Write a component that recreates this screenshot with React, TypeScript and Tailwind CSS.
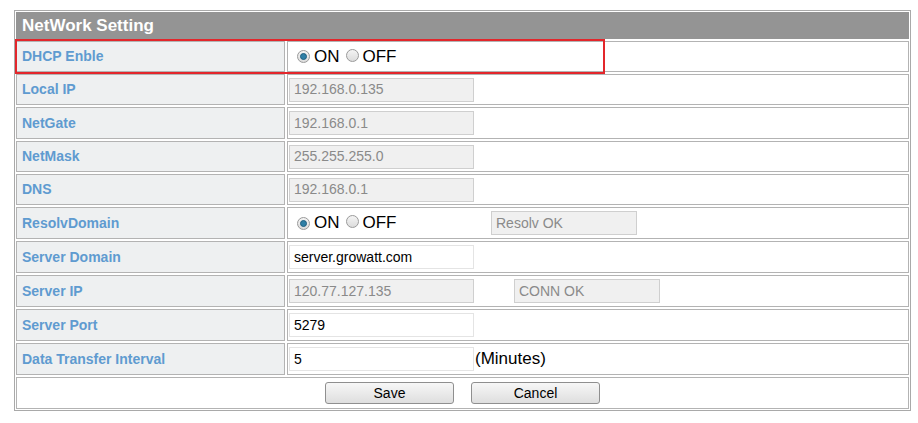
import { ReactNode } from 'react'

const FONT = { fontFamily: '"Liberation Sans", Arial, sans-serif' }

function Radio({ checked }: { checked?: boolean }) {
  return (
    <span className="inline-flex items-center justify-center w-[13px] h-[13px] rounded-full border border-[#9a9a9a] bg-gradient-to-b from-[#f4f4f4] to-[#dcdcdc]">
      {checked && <span className="w-[7px] h-[7px] rounded-full bg-[#2f7fa6] border border-[#1f5f80]" />}
    </span>
  )
}

function OnOff() {
  return (
    <div className="flex items-center text-[17px] text-black">
      <Radio checked />
      <span className="ml-[4px]">ON</span>
      <span className="ml-[6px]"><Radio /></span>
      <span className="ml-[4px]">OFF</span>
    </div>
  )
}

function Box({ value, disabled, w = 'w-[185px]' }: { value: string; disabled?: boolean; w?: string }) {
  return (
    <div
      className={`${w} h-[24px] flex items-center px-[4px] text-[14px] border ${
        disabled ? 'bg-[#f0f0f0] border-[#cfcfcf] text-[#8a8a8a]' : 'bg-white border-[#e4e4e4] text-black'
      }`}
    >
      {value}
    </div>
  )
}

function Row({ label, h, children }: { label: string; h: string; children?: ReactNode }) {
  return (
    <div className={`flex gap-[2px] ${h}`}>
      <div className="w-[269px] shrink-0 border border-[#b3b3b3] bg-[#eef0f1] flex items-center pl-[5px] text-[14px] font-bold text-[#5f9bd0]">
        {label}
      </div>
      <div className="flex-1 border border-[#b3b3b3] bg-white flex items-center pl-[1px]">{children}</div>
    </div>
  )
}

export default function App() {
  return (
    <div className="w-[918px] h-[423px] bg-white pt-[10px] pl-[14px]" style={FONT}>
      <div className="relative w-[897px] border border-[#a9a9a9] bg-white p-px flex flex-col gap-[2px]">
        <div className="h-[27px] bg-[#949494] flex items-center pl-[6px] text-[17px] font-bold text-white">
          NetWork Setting
        </div>

        <Row label="DHCP Enble" h="h-[31px]">
          <div className="pl-[8px]"><OnOff /></div>
        </Row>
        <Row label="Local IP" h="h-[31px]"><Box value="192.168.0.135" disabled /></Row>
        <Row label="NetGate" h="h-[32px]"><Box value="192.168.0.1" disabled /></Row>
        <Row label="NetMask" h="h-[31px]"><Box value="255.255.255.0" disabled /></Row>
        <Row label="DNS" h="h-[31px]"><Box value="192.168.0.1" disabled /></Row>
        <Row label="ResolvDomain" h="h-[32px]">
          <div className="pl-[8px] w-[202px]"><OnOff /></div>
          <Box value="Resolv OK" disabled w="w-[146px]" />
        </Row>
        <Row label="Server Domain" h="h-[32px]"><Box value="server.growatt.com" /></Row>
        <Row label="Server IP" h="h-[32px]">
          <Box value="120.77.127.135" disabled />
          <div className="w-[40px]" />
          <Box value="CONN OK" disabled w="w-[146px]" />
        </Row>
        <Row label="Server Port" h="h-[32px]"><Box value="5279" /></Row>
        <Row label="Data Transfer Interval" h="h-[32px]">
          <Box value="5" />
          <span className="ml-[1px] text-[17px] text-black">(Minutes)</span>
        </Row>
        <div className="h-[32px] border border-[#b3b3b3] bg-white flex items-center justify-center gap-[17px]">
          <button className="w-[129px] h-[22px] rounded-[3px] border border-[#8f8f8f] bg-gradient-to-b from-[#f7f7f7] to-[#dedede] text-[14px] text-black">
            Save
          </button>
          <button className="w-[129px] h-[22px] rounded-[3px] border border-[#8f8f8f] bg-gradient-to-b from-[#f7f7f7] to-[#dedede] text-[14px] text-black">
            Cancel
          </button>
        </div>

        <div className="absolute left-0 top-[28px] w-[590px] h-[35px] border-2 border-[#e3262b] pointer-events-none" />
      </div>
    </div>
  )
}
